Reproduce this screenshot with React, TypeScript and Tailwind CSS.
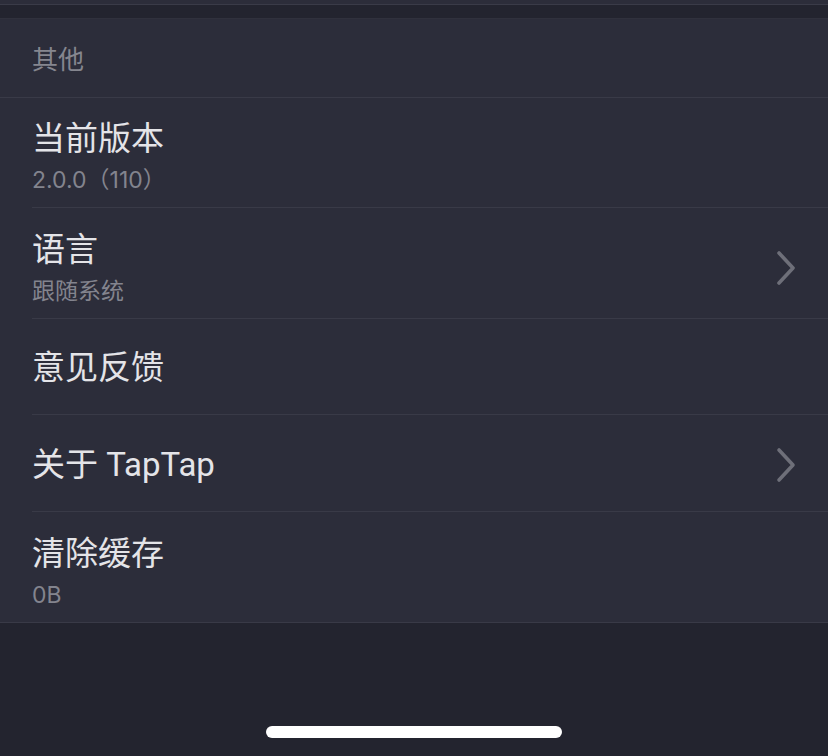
import React from "react";

const Chevron = () => (
  <svg width="24" height="36" viewBox="0 0 24 36" fill="none" className="shrink-0">
    <path d="M5 3 L19 18 L5 33" stroke="#6e6f79" strokeWidth="3.6" strokeLinecap="round" strokeLinejoin="round" />
  </svg>
);

type RowProps = { title: string; sub?: string; chevron?: boolean; last?: boolean; h: string };

const Row = ({ title, sub, chevron, last, h }: RowProps) => (
  <div className={`pl-8 ${h}`}>
    <div
      className={`flex h-full items-center pr-[30px] ${sub ? "pt-[9px]" : "pt-[3px]"} ${
        last ? "" : "border-b border-[#393a47]"
      }`}
    >
      <div className="flex flex-1 flex-col">
        <div
          className="text-[33px] leading-[40px] text-[#e4e4e8]"
          style={{ fontFamily: '"Roboto", "Noto Sans CJK SC", sans-serif' }}
        >
          {title}
        </div>
        {sub && <div className="mt-[6px] text-[23px] leading-[30px] text-[#83848e]">{sub}</div>}
      </div>
      {chevron && <Chevron />}
    </div>
  </div>
);

export default function App() {
  return (
    <div
      className="flex h-[756px] w-[828px] flex-col overflow-hidden bg-[#23242f]"
      style={{ fontFamily: '"Inter", "Noto Sans CJK SC", sans-serif' }}
    >
      <div className="h-[5px] border-b border-[#3a3b48] bg-[#2c2d3a]" />
      <div className="h-[13px] bg-[#23242f]" />
      <div className="border-t border-[#30313d] bg-[#2c2d3a]">
        <div className="flex h-[79px] items-center border-b border-[#393a47] pl-8 pt-[2px] text-[26px] text-[#85868f]">其他</div>
        <Row title="当前版本" sub="2.0.0（110）" h="h-[110px]" />
        <Row title="语言" sub="跟随系统" chevron h="h-[111px]" />
        <Row title="意见反馈" h="h-[96px]" />
        <Row title="关于 TapTap" chevron h="h-[97px]" />
        <Row title="清除缓存" sub="0B" last h="h-[110px]" />
      </div>
      <div className="h-px bg-[#393a47]" />
      <div className="flex flex-1 items-end justify-center pb-[18px]">
        <div className="h-[12px] w-[296px] rounded-full bg-white" />
      </div>
    </div>
  );
}
